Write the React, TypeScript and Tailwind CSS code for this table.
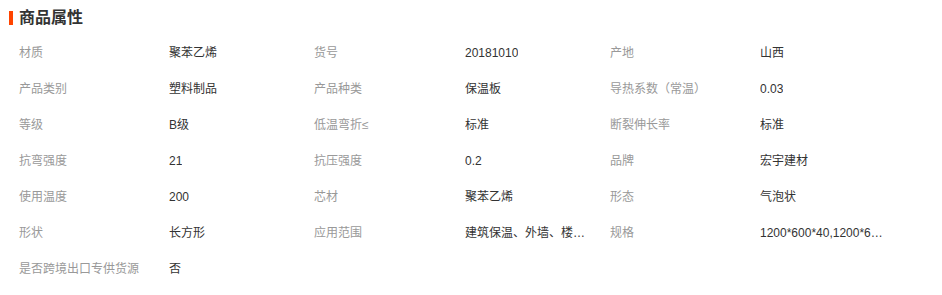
const attrs: [string, string][] = [
  ['材质', '聚苯乙烯'],
  ['货号', '20181010'],
  ['产地', '山西'],
  ['产品类别', '塑料制品'],
  ['产品种类', '保温板'],
  ['导热系数（常温）', '0.03'],
  ['等级', 'B级'],
  ['低温弯折≤', '标准'],
  ['断裂伸长率', '标准'],
  ['抗弯强度', '21'],
  ['抗压强度', '0.2'],
  ['品牌', '宏宇建材'],
  ['使用温度', '200'],
  ['芯材', '聚苯乙烯'],
  ['形态', '气泡状'],
  ['形状', '长方形'],
  ['应用范围', '建筑保温、外墙、楼顶、冷库'],
  ['规格', '1200*600*40,1200*600*50,1200*600*60'],
  ['是否跨境出口专供货源', '否'],
];

export default function App() {
  return (
    <div
      className="h-[295px] w-[942px] bg-white"
      style={{ fontFamily: '"Liberation Sans", "Noto Sans CJK SC", sans-serif' }}
    >
      <div className="flex h-[35px] items-center pl-[9px]">
        <span className="h-[14px] w-[4px] bg-[#ff4400]" />
        <h2 className="ml-[6px] text-[16px] font-bold leading-none text-[#333]">商品属性</h2>
      </div>
      <div className="grid grid-cols-[150px_145px_151px_145px_150px_1fr] pl-[19px] text-[12px]">
        {attrs.map(([label, value]) => (
          <div key={label} className="contents">
            <div className="flex h-[36px] items-center whitespace-nowrap text-[#999]">{label}</div>
            <div className="flex h-[36px] items-center text-[#333]">
              <span className="block max-w-[127px] truncate">{value}</span>
            </div>
          </div>
        ))}
      </div>
    </div>
  );
}
